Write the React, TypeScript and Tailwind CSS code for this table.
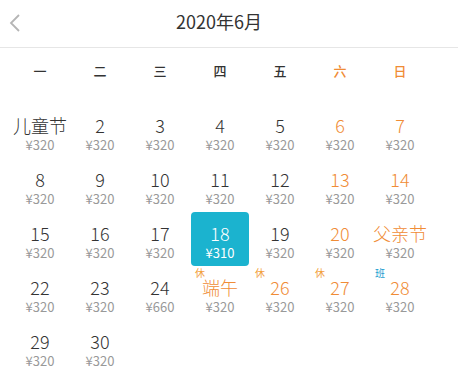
import React from "react";

type Day = {
  n: number;
  label?: string;
  price: string;
  weekend?: boolean;
  tag?: "休" | "班";
  active?: boolean;
};

const DAYS: Day[] = [
  { n: 1, label: "儿童节", price: "320" },
  { n: 2, price: "320" },
  { n: 3, price: "320" },
  { n: 4, price: "320" },
  { n: 5, price: "320" },
  { n: 6, price: "320", weekend: true },
  { n: 7, price: "320", weekend: true },
  { n: 8, price: "320" },
  { n: 9, price: "320" },
  { n: 10, price: "320" },
  { n: 11, price: "320" },
  { n: 12, price: "320" },
  { n: 13, price: "320", weekend: true },
  { n: 14, price: "320", weekend: true },
  { n: 15, price: "320" },
  { n: 16, price: "320" },
  { n: 17, price: "320" },
  { n: 18, price: "310", active: true },
  { n: 19, price: "320" },
  { n: 20, price: "320", weekend: true },
  { n: 21, label: "父亲节", price: "320", weekend: true },
  { n: 22, price: "320" },
  { n: 23, price: "320" },
  { n: 24, price: "660" },
  { n: 25, label: "端午", price: "320", weekend: true, tag: "休" },
  { n: 26, price: "320", weekend: true, tag: "休" },
  { n: 27, price: "320", weekend: true, tag: "休" },
  { n: 28, price: "320", weekend: true, tag: "班" },
  { n: 29, price: "320" },
  { n: 30, price: "320" },
];

const WEEK = ["一", "二", "三", "四", "五", "六", "日"];

function DayCell({ d }: { d: Day }) {
  return (
    <div
      className={`relative h-[54px] flex flex-col items-center ${
        d.active ? "bg-[#1bb3cf] rounded-[4px] mx-[1px]" : ""
      }`}
    >
      {d.tag && (
        <span
          className={`absolute left-[5px] top-[2px] text-[10px] leading-none ${
            d.tag === "班" ? "text-[#1a9ccf]" : "text-[#f2a03c]"
          }`}
        >
          {d.tag}
        </span>
      )}
      <span
        className={`mt-[9px] text-[18px] leading-[24px] font-light ${
          d.active ? "text-white" : d.weekend ? "text-[#f08c36]" : "text-[#333]"
        }`}
      >
        {d.label ?? d.n}
      </span>
      <span
        className={`text-[13px] leading-[16px] ${d.active ? "text-white" : "text-[#999]"}`}
      >
        ¥{d.price}
      </span>
    </div>
  );
}

export default function App() {
  return (
    <div
      className="w-[458px] h-[368px] overflow-hidden bg-white"
      style={{ fontFamily: '"Noto Sans CJK SC", "Noto Sans", sans-serif' }}
    >
      {/* header */}
      <div className="relative h-[48px] flex items-center justify-center pr-[20px] border-b border-[#e6e6e6]">
        <svg
          className="absolute left-[8px] top-[14px]"
          width="14"
          height="18"
          viewBox="0 0 14 18"
          fill="none"
        >
          <polyline points="11,1 3,9 11,17" stroke="#b5b5b5" strokeWidth="1.8" strokeLinejoin="miter" />
        </svg>
        <span className="text-[18px] text-[#333] -mt-[4px]">2020年6月</span>
      </div>

      {/* weekdays */}
      <div className="grid grid-cols-[repeat(7,60px)] px-[10px] h-[44px] items-center mt-[1px]">
        {WEEK.map((w, i) => (
          <span
            key={w}
            className={`text-center text-[13px] font-medium ${i >= 5 ? "text-[#f08c36]" : "text-[#333]"}`}
          >
            {w}
          </span>
        ))}
      </div>

      {/* days */}
      <div className="grid grid-cols-[repeat(7,60px)] px-[10px] mt-[11px]">
        {DAYS.map((d) => (
          <DayCell key={d.n} d={d} />
        ))}
      </div>
    </div>
  );
}
